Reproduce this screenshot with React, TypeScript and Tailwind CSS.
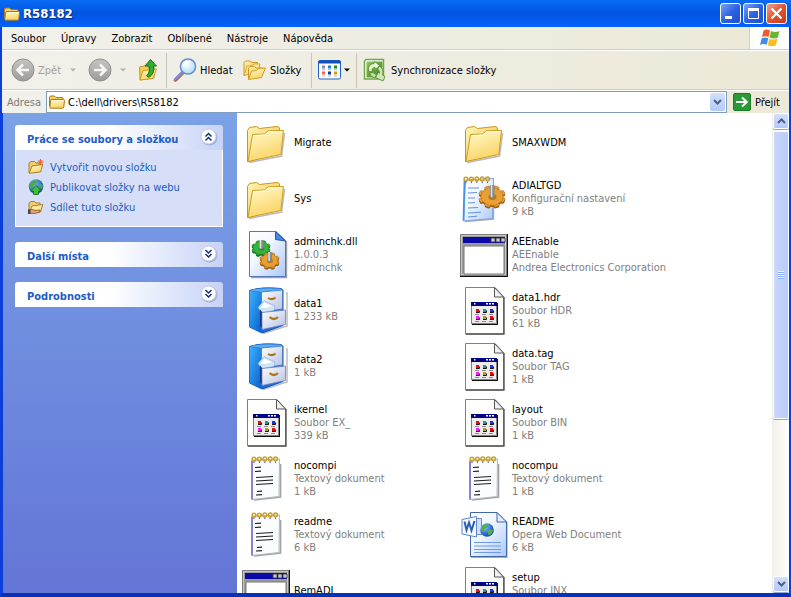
import type { ReactNode } from "react";

const menus = ["Soubor", "Úpravy", "Zobrazit", "Oblíbené", "Nástroje", "Nápověda"];

type IconName = "folder" | "dll" | "config" | "app" | "cabinet" | "generic" | "text" | "webdoc";

const files: { name: string; icon: IconName; lines: string[] }[] = [
  { name: "Migrate", icon: "folder", lines: [] },
  { name: "SMAXWDM", icon: "folder", lines: [] },
  { name: "Sys", icon: "folder", lines: [] },
  { name: "ADIALTGD", icon: "config", lines: ["Konfigurační nastavení", "9 kB"] },
  { name: "adminchk.dll", icon: "dll", lines: ["1.0.0.3", "adminchk"] },
  { name: "AEEnable", icon: "app", lines: ["AEEnable", "Andrea Electronics Corporation"] },
  { name: "data1", icon: "cabinet", lines: ["1 233 kB"] },
  { name: "data1.hdr", icon: "generic", lines: ["Soubor HDR", "61 kB"] },
  { name: "data2", icon: "cabinet", lines: ["1 kB"] },
  { name: "data.tag", icon: "generic", lines: ["Soubor TAG", "1 kB"] },
  { name: "ikernel", icon: "generic", lines: ["Soubor EX_", "339 kB"] },
  { name: "layout", icon: "generic", lines: ["Soubor BIN", "1 kB"] },
  { name: "nocompi", icon: "text", lines: ["Textový dokument", "1 kB"] },
  { name: "nocompu", icon: "text", lines: ["Textový dokument", "1 kB"] },
  { name: "readme", icon: "text", lines: ["Textový dokument", "6 kB"] },
  { name: "README", icon: "webdoc", lines: ["Opera Web Document", "6 kB"] },
  { name: "RemADI", icon: "app", lines: [] },
  { name: "setup", icon: "generic", lines: ["Soubor INX", "1 kB"] },
];

// gradients shared by all icons
function Gradients() {
  return (
    <svg className="absolute size-0" aria-hidden="true">
      <defs>
        <linearGradient id="folderFront" x1="0" y1="0" x2="0.4" y2="1">
          <stop offset="0" stopColor="#fffbd0" />
          <stop offset="1" stopColor="#fbd465" />
        </linearGradient>
        <linearGradient id="folderBack" x1="0" y1="0" x2="1" y2="1">
          <stop offset="0" stopColor="#fff5b8" />
          <stop offset="1" stopColor="#eebb3c" />
        </linearGradient>
        <linearGradient id="bluePage" x1="0" y1="0" x2="1" y2="1">
          <stop offset="0" stopColor="#ffffff" />
          <stop offset="0.4" stopColor="#f2f7ff" />
          <stop offset="1" stopColor="#a9c8fb" />
        </linearGradient>
        <linearGradient id="cabSide" x1="0" y1="0" x2="1" y2="1">
          <stop offset="0" stopColor="#3fb0fb" />
          <stop offset="1" stopColor="#0560cf" />
        </linearGradient>
        <linearGradient id="drawer" x1="0" y1="0" x2="1" y2="1">
          <stop offset="0" stopColor="#ffffff" />
          <stop offset="1" stopColor="#b6bfe2" />
        </linearGradient>
        <linearGradient id="greyDisc" x1="0" y1="0" x2="0" y2="1">
          <stop offset="0" stopColor="#c6c5c1" />
          <stop offset="1" stopColor="#9b9b99" />
        </linearGradient>
        <linearGradient id="syncGreen" x1="0" y1="0" x2="1" y2="1">
          <stop offset="0" stopColor="#8fc85a" />
          <stop offset="1" stopColor="#3f7f1c" />
        </linearGradient>
        <radialGradient id="lens" cx="0.4" cy="0.35" r="0.7">
          <stop offset="0" stopColor="#ffffff" />
          <stop offset="1" stopColor="#a9dcf8" />
        </radialGradient>
        <radialGradient id="globe" cx="0.35" cy="0.3" r="0.8">
          <stop offset="0" stopColor="#8cc4ff" />
          <stop offset="0.6" stopColor="#2a6fd0" />
          <stop offset="1" stopColor="#123c8a" />
        </radialGradient>
      </defs>
    </svg>
  );
}

function Gear({ x, y, r, fill, stroke }: { x: number; y: number; r: number; fill: string; stroke: string }) {
  const teeth = [0, 45, 90, 135, 180, 225, 270, 315];
  const cog = (
    <g>
      {teeth.map((a) => (
        <rect key={a} x={-r * 0.21} y={-r} width={r * 0.42} height={r * 0.6} rx="1.5" transform={`scale(1 .8) rotate(${a + 22})`} />
      ))}
      <ellipse rx={r * 0.82} ry={r * 0.66} />
    </g>
  );
  return (
    <g transform={`translate(${x} ${y})`}>
      <g transform="translate(0 1.5)" fill={stroke}>
        {cog}
      </g>
      <g fill={fill} stroke={stroke} strokeWidth="0.5">
        {cog}
      </g>
      <ellipse rx={r * 0.78} ry={r * 0.62} fill={fill} />
      <ellipse cx="0.5" cy="0.5" rx={r * 0.3} ry={r * 0.22} fill={stroke} opacity=".6" />
      <rect x="-2" y={-r * 0.85} width="4.500" height={r * 0.95} rx="1" fill="#85888d" />
      <rect x="-1.2" y={-r * 0.85} width="1.500" height={r * 0.9} fill="#dfe1e4" />
    </g>
  );
}

function Spiral({ from }: { from: number }) {
  return (
    <g fill="none" stroke="#c9a02a" strokeWidth="1.5">
      {[0, 1, 2, 3, 4].map((i) => (
        <g key={i}>
          <circle cx={from + i * 5.4} cy={5.2 - i * 0.1} r="1.9" />
          <path d={`M${from + i * 5.4} 7.5v1.6`} stroke="#5a55a0" strokeWidth="1" />
        </g>
      ))}
    </g>
  );
}

const drawings: Record<IconName, ReactNode> = {
  folder: (
    <>
      <path d="M8 44.500L40.500 38L43.500 15" fill="none" stroke="#9c9c9c" strokeWidth="1.600" opacity=".7" />
      <path d="M6.500 43.500V12.500L8.500 9.500L15.500 8.500L18.500 10.500L36 8.500Q38.500 8.500 38.500 11V36Z" fill="url(#folderBack)" stroke="#c9961b" />
      <path d="M7 43.500L11.500 16.500L23.500 16L27 12.800L42.500 12.500L39.800 36.500Z" fill="url(#folderFront)" stroke="#cf9c1c" />
      <path d="M12.600 17.600L24 17L27.400 13.900H41.300" fill="none" stroke="#fffde8" />
    </>
  ),
  dll: (
    <>
      <path d="M10 47.500H45.500V11" fill="none" stroke="#777" strokeWidth="1.400" opacity=".7" />
      <path d="M8.500 1.500H35L44.500 10.500V46.500H8.500Z" fill="url(#bluePage)" stroke="#5377b8" />
      <path d="M34.500 1.500L44.500 11L34.500 9.500Z" fill="#3c8cf0" stroke="#2659a8" />
      <Gear x={20} y={18} r={9.5} fill="#35b43b" stroke="#12741c" />
      <Gear x={28.5} y={30.5} r={10} fill="#e8a032" stroke="#9a5c10" />
    </>
  ),
  config: (
    <>
      <path d="M6 47.500L34.500 45V20" fill="none" stroke="#888" strokeWidth="1.400" opacity=".7" />
      <path d="M6.500 6L34.500 4.500L33.500 44.500L4.500 47Z" fill="url(#bluePage)" stroke="#7ea2dc" />
      <path d="M5.500 7L4.500 46.500" stroke="#3f95e8" strokeWidth="1.800" />
      <Spiral from={7} />
      <path d="M9 14h11M9 19l9-.5M9 24h7M9 29l7-.5M9 34l10-.5M9 39l13-.8M9 43l9-.8" fill="none" stroke="#5c93dc" />
      <Gear x={33} y={22.5} r={13.5} fill="#ea9f34" stroke="#9a5c10" />
    </>
  ),
  app: (
    <>
      <path d="M1 4H49V47H1Z" fill="#111" />
      <path d="M1 4H48V46H1Z" fill="#7d7d7d" />
      <path d="M2 5H47V45H2Z" fill="#c6c6c6" />
      <path d="M3 6H46V44H3Z" fill="#9b9b9b" />
      <path d="M4 7H46V13H4Z" fill="#0a0aa8" />
      <path d="M32 8h4v4h-4zM37 8h4v4h-4zM42 8h4v4h-4z" fill="#c9c9c9" stroke="#333" strokeWidth=".8" />
      <path d="M5 16H45V44H5Z" fill="#fff" stroke="#777" />
    </>
  ),
  cabinet: (
    <>
      <path d="M22 47.500L46 40V6" fill="none" stroke="#777" strokeWidth="1.500" opacity=".5" />
      <path d="M8.500 4.500Q20 .5 40 2.500L42 4V39.500L21 47L8.500 41Z" fill="#1c6cd8" stroke="#1356b0" />
      <path d="M8.500 4.800L20.500 6.500V46.500L8.500 41Z" fill="url(#cabSide)" />
      <path d="M9 4.500Q20 1 40 2.800L42 4L20.500 6Z" fill="#5aaef2" />
      <path d="M20.500 6L41.500 4V23L20.500 26Z" fill="url(#drawer)" stroke="#3d78cf" strokeWidth=".8" />
      <path d="M27 12Q31 14.500 34.500 11.500" fill="none" stroke="#a87418" strokeWidth="2" />
      <path d="M17 21.500L23 14.500L34 20L33 24.500L21 27Z" fill="#cfe3f8" stroke="#7fa8dc" strokeWidth=".6" />
      <path d="M19 21.500L23.500 16.500L31 20.500L24 22Z" fill="#fff" />
      <path d="M19 23.500L21.500 26.500V43L19 40Z" fill="#16357a" />
      <path d="M21 26.500L44.500 24V38.500L21 43.500Z" fill="url(#drawer)" stroke="#6d80c4" strokeWidth=".8" />
      <path d="M28.500 31Q33 35 37 31" fill="none" stroke="#b27714" strokeWidth="2.200" />
    </>
  ),
  generic: (
    <>
      <path d="M6.500 1.500H36L44.500 10.500V48H6.500Z" fill="#fefefc" stroke="#808080" />
      <path d="M7 48H45V11" fill="none" stroke="#555" strokeWidth="1.400" />
      <path d="M35.500 1.500V11H44.500Z" fill="#f1f1f1" stroke="#555" />
      <path d="M13 17H39V39H13Z" fill="#111" />
      <path d="M12 16H38V38H12Z" fill="#808080" />
      <path d="M13 17H37V37H13Z" fill="#ececec" />
      <path d="M12 16H38V20H12Z" fill="#000088" />
      <path d="M15 17h1.500v1.500h-1.500z" fill="#ff3" />
      <path d="M27 17h2v1.500h-2zM30 17h2v1.500h-2zM33 17h2v1.500h-2z" fill="#fff" />
      <path d="M17 23h3v3h-3z" fill="#e01010" />
      <path d="M24 23h3v3h-3z" fill="#10a0a0" />
      <path d="M31 23h3v3h-3z" fill="#2030e0" />
      <path d="M17 30h3v3h-3z" fill="#f020f0" />
      <path d="M24 30h3v3h-3z" fill="#b0a000" />
      <path d="M31 30h3v3h-3z" fill="#e01010" />
      <path d="M17 26.500h3.500v-2M24 26.500h3.500v-2M31 26.500h3.500v-2M17 33.500h3.500v-2M24 33.500h3.500v-2M31 33.500h3.500v-2" fill="none" stroke="#111" />
      <path d="M16 28.500h4M23 28.500h4M30 28.500h4M16 35.500h4M23 35.500h4M30 35.500h4" stroke="#8a8a8a" />
    </>
  ),
  text: (
    <>
      <path d="M13 46L39.500 43V10" fill="none" stroke="#888" strokeWidth="1.600" opacity=".8" />
      <path d="M11.500 6L38.500 5L38 42.500L11 45.500Z" fill="#fbfcfd" stroke="#a9b8c4" />
      <path d="M11 7L11 45.500" stroke="#7d7cd0" strokeWidth="1.800" />
      <Spiral from={13} />
      <path d="M14 13.500l6-.3M14 17.500l6-.3M15 23.500l17-1M15 27l17-1M15 30.500l17-1M16 37.500l5-.3M15 41l6-.4" stroke="#1d1d1d" strokeWidth="1.200" />
    </>
  ),
  webdoc: (
    <>
      <path d="M12 47.500H48V12" fill="none" stroke="#888" strokeWidth="1.200" opacity=".7" />
      <path d="M11.500 2.500H38L47.500 12V46.500H11.500Z" fill="url(#bluePage)" stroke="#3f67a8" />
      <path d="M38 2.500V12H47.500Z" fill="#e2edff" stroke="#3f67a8" />
      <path d="M15 32.500h27M15 36h27M15 39.500h27M15 42.500h27" stroke="#6f9be0" />
      <path d="M16 8.500H22.500V24.500H16Z" fill="#cfe0fa" stroke="#6f8fc8" />
      <path d="M3 9.500L17.500 6.500V27L3 24Z" fill="#f4f8ff" stroke="#5d84cc" />
      <path d="M5.500 11.500L7.500 20L10 12.500L12.500 20.500L15.500 11" fill="none" stroke="#2a5cb8" strokeWidth="2" />
      <circle cx="28" cy="20" r="6.800" fill="url(#globe)" />
      <path d="M24 15.500q3-2 5.500-1l-1 3-3 1.500-2.500 3-1-2zM28.500 21l3.500-2 2 1.500-1.500 3.500-3 1.500z" fill="#52b244" />
    </>
  ),
};

function FolderIcon({ className }: { className?: string }) {
  return (
    <svg viewBox="0 0 16 16" className={className} aria-hidden="true">
      <path d="M.5 12V3.500Q.5 2 2 2H5.500L7 3.500H13Q14 3.500 14 4.500V12Z" fill="#f7cf5c" stroke="#a8781a" />
      <path d="M1.500 14.200Q.8 14.200 .8 13L1.600 6.800Q1.800 5.500 3 5.500H14.500Q15.500 5.500 15.500 6.500L14.800 13Q14.600 14.200 13.500 14.200Z" fill="url(#folderFront)" stroke="#a8781a" />
      <path d="M2.800 6.500H14.500" stroke="#fffce0" />
    </svg>
  );
}

function NavDisc({ back }: { back?: boolean }) {
  return (
    <svg viewBox="0 0 24 24" className="size-6" aria-hidden="true">
      <circle cx="12" cy="12" r="11" fill="url(#greyDisc)" stroke="#8f8f8d" />
      <path d={back ? "M18 12H7M12 6.500L6.500 12L12 17.500" : "M6 12H17M12 6.500L17.500 12L12 17.500"} fill="none" stroke="#f6f5f2" strokeWidth="2.600" />
    </svg>
  );
}

function Caret({ className }: { className: string }) {
  return (
    <svg viewBox="0 0 6 4" className={`h-1 w-1.5 ${className}`} aria-hidden="true">
      <path d="M0 0.500H6L3 3.500Z" fill="currentColor" />
    </svg>
  );
}

function UpIcon() {
  return (
    <svg viewBox="0 0 20 24" className="h-6 w-5" aria-hidden="true">
      <path d="M1.500 9L8 7.500L10 9.500L16 9V20L2 22Z" fill="#f2cc55" stroke="#c89a20" />
      <path d="M2 22L5 12.500L11 12L18.500 11L15 20.500Z" fill="url(#folderFront)" stroke="#cf9c1c" />
      <path d="M8.500 17.500Q12.500 15 11 8H7L12.500 1.500L18.500 8H15.500Q17 16 10.500 19.500Z" fill="#2fae30" stroke="#11701a" />
    </svg>
  );
}

function SearchIcon() {
  return (
    <svg viewBox="0 0 24 24" className="size-6" aria-hidden="true">
      <path d="M10.500 14L2.500 22" stroke="#b06a50" strokeWidth="3.600" strokeLinecap="round" />
      <path d="M9.500 13.800L2.200 21" stroke="#7c8fe0" strokeWidth="2.400" strokeLinecap="round" />
      <circle cx="15" cy="8.500" r="7.600" fill="url(#lens)" stroke="#6a8fd0" strokeWidth="1.500" />
      <path d="M10.500 8Q11 4 15.500 3.800" fill="none" stroke="#fff" strokeWidth="1.600" />
    </svg>
  );
}

function FoldersIcon() {
  return (
    <svg viewBox="0 0 24 24" className="size-6" aria-hidden="true">
      <path d="M1 17.500V4.500L2.500 3H7L9 4.500H14.500V7" fill="url(#folderBack)" stroke="#d3982a" />
      <path d="M1 17.500L4 8L9 7.500L11 6H17L15 14Z" fill="url(#folderFront)" stroke="#d9a52c" />
      <path d="M5.500 21V10L7 8.500H11.500L13.500 10H19.500V12" fill="url(#folderBack)" stroke="#d3982a" />
      <path d="M5.500 21.500L8.500 13L13.500 12.500L15.500 10.500L22.500 10L18.500 19.500Z" fill="url(#folderFront)" stroke="#cf9c1c" />
    </svg>
  );
}

function ViewsIcon() {
  return (
    <svg viewBox="0 0 24 20" className="h-5 w-6" aria-hidden="true">
      <rect x=".5" y=".5" width="22" height="18.500" rx="1.500" fill="#fff" stroke="#1c5fc8" />
      <path d="M.5 1.500Q.5 .5 2 .5H21Q22.500 .5 22.500 1.500V3.500H.5Z" fill="#1450b8" />
      <path d="M4 5.500h3v3h-3z" fill="#8b86c0" />
      <path d="M10 5.500h3v3h-3z" fill="#1a7fe0" />
      <path d="M16 5.500h3v3h-3z" fill="#14961c" />
      <path d="M4 11.500h3v3h-3z" fill="#f06848" />
      <path d="M10 11.500h3v3h-3z" fill="#1038a8" />
      <path d="M16 11.500h3v3h-3z" fill="#d0a010" />
      <path d="M4 9.700h3M10 9.700h3M16 9.700h3M4 16h3M10 16h3M16 16h3" stroke="#b5b5b5" />
    </svg>
  );
}

function SyncIcon() {
  return (
    <svg viewBox="0 0 24 24" className="size-6" aria-hidden="true">
      <path d="M3 1.500H20.500V21H1.500V3Z" fill="#fff" stroke="#6fa848" strokeWidth="1.500" />
      <path d="M4 3.500H19.500V19.500H3.500V4Z" fill="url(#syncGreen)" />
      <path d="M5.500 13Q4.500 6 11 5.500L11.500 3.500L17 7.500L12.500 11.500L12 9.500Q8.500 9.500 9 14Z" fill="#e6f4d6" stroke="#4d8a2a" strokeWidth=".8" />
      <path d="M16.500 8Q21 11 19.500 17L22 18.500L20 23L12.500 19.500L15.500 14L16.500 15.500Q17 12.500 14.500 11Z" fill="#d2e6bb" stroke="#4d8a2a" strokeWidth=".8" />
      <path d="M6.500 15L10.500 14.500Q11.500 16.500 13.500 16.500L12 20Q8 19.500 6.500 15Z" fill="#c2dda6" stroke="#4d8a2a" strokeWidth=".8" />
    </svg>
  );
}

function WindowsFlag() {
  return (
    <svg viewBox="0 0 20 18" className="h-[18px] w-5" aria-hidden="true">
      <path d="M3.500 1.500Q6.500 -.3 10 1.500L8.500 8Q5 6.500 2 8Z" fill="#ee5a2c" />
      <path d="M11 2Q15 4 19.500 2L17.800 8.800Q13.500 10.500 9.500 8.500Z" fill="#6db52f" />
      <path d="M1.700 9.200Q5 7.600 8.300 9.200L6.800 15.800Q3.500 14.300 0 16Z" fill="#3f8fe6" />
      <path d="M9.200 9.700Q13 11.400 17.500 9.800L15.800 16.500Q12 18 7.700 16.200Z" fill="#f9bf1e" />
    </svg>
  );
}

function TitleBar() {
  const button = "flex size-[21px] items-center justify-center rounded-[3px] border border-white";
  return (
    <header className="flex h-[27px] shrink-0 items-center bg-linear-to-b from-[#0a6cf5] via-[#0353e2] to-[#0463fb] pr-1 pl-1">
      <FolderIcon className="size-4" />
      <h1 className="ml-[3px] grow text-[13px] leading-4 font-bold text-white [text-shadow:1px_1px_1px_#0a2a80]">R58182</h1>
      <div className="flex gap-[2px]">
        <button aria-label="Minimalizovat" className={`${button} bg-linear-to-br from-[#7da2f4] via-[#2f62e0] to-[#1d4fd0]`}>
          <svg viewBox="0 0 19 19" className="size-[19px]">
            <path d="M4 12h7v3H4z" fill="#fff" />
          </svg>
        </button>
        <button aria-label="Maximalizovat" className={`${button} bg-linear-to-br from-[#7da2f4] via-[#2f62e0] to-[#1d4fd0]`}>
          <svg viewBox="0 0 19 19" className="size-[19px]">
            <path d="M4.500 5.500H14.500V14.500H4.500Z" fill="none" stroke="#fff" />
            <path d="M4 4h11v3H4z" fill="#fff" />
          </svg>
        </button>
        <button aria-label="Zavřít" className={`${button} bg-linear-to-br from-[#f0a18c] via-[#e0542f] to-[#c83a14]`}>
          <svg viewBox="0 0 19 19" className="size-[19px]">
            <path d="M4.500 4.500L14.500 14.500M14.500 4.500L4.500 14.500" stroke="#fff" strokeWidth="2.200" />
          </svg>
        </button>
      </div>
    </header>
  );
}

function MenuBar() {
  return (
    <div className="flex h-[23px] shrink-0 border-b border-[#d3d0c1]">
      <nav className="flex grow items-center gap-[15px] pl-[9px]">
        {menus.map((m) => (
          <button key={m}>{m}</button>
        ))}
      </nav>
      <div className="flex w-10 items-center justify-center border-l border-[#d3d0c1] bg-white">
        <WindowsFlag />
      </div>
    </div>
  );
}

function Separator() {
  return <div className="h-[35px] w-px bg-[#c9c6b5]" />;
}

function Toolbar() {
  return (
    <div className="flex h-10 shrink-0 items-center border-t border-b border-t-white border-b-[#d3d0c1] pl-[9px]">
      <button className="flex w-[59px] items-center gap-[3px] text-[#a5a296]" disabled>
        <NavDisc back />
        Zpět
      </button>
      <Caret className="text-[#b3b0a3]" />
      <button className="ml-3 flex w-8 items-center" aria-label="Vpřed" disabled>
        <NavDisc />
      </button>
      <Caret className="text-[#b3b0a3]" />
      <button className="mr-2 ml-3" aria-label="Nahoru">
        <UpIcon />
      </button>
      <Separator />
      <button className="ml-1.5 flex w-[70px] items-center gap-[3px]">
        <SearchIcon />
        Hledat
      </button>
      <button className="flex w-[68px] items-center gap-[3px]">
        <FoldersIcon />
        Složky
      </button>
      <Separator />
      <button className="mr-1.5 ml-1.5 flex items-center gap-[2px]" aria-label="Zobrazení">
        <ViewsIcon />
        <Caret className="text-black" />
      </button>
      <Separator />
      <button className="ml-1.5 flex items-center gap-1">
        <SyncIcon />
        Synchronizace složky
      </button>
    </div>
  );
}

function AddressBar() {
  return (
    <div className="flex h-[23px] shrink-0 items-center border-t border-white pr-[9px] pl-[5px]">
      <label htmlFor="address" className="w-[39px] text-[#7f7c73]">
        Adresa
      </label>
      <div className="flex h-[22px] grow items-center border border-[#7f9db9] bg-white pr-px pl-[2px]">
        <FolderIcon className="size-4" />
        <input id="address" type="text" defaultValue="C:\dell\drivers\R58182" className="ml-[3px] min-w-0 grow outline-none" />
        <button aria-label="Historie adres" className="flex h-[18px] w-[15px] items-center justify-center rounded-[2px] bg-linear-to-b from-[#d3e0fd] to-[#b5c9f8]">
          <Chevron />
        </button>
      </div>
      <button className="ml-1.5 flex items-center gap-1">
        <svg viewBox="0 0 18 18" className="size-[18px]" aria-hidden="true">
          <rect x=".5" y=".5" width="17" height="17" rx="1.500" fill="#2a9a36" stroke="#1d7a28" />
          <path d="M3 9H13.500M9 4.500L13.800 9L9 13.500" fill="none" stroke="#fff" strokeWidth="2" />
        </svg>
        Přejít
      </button>
    </div>
  );
}

function Chevron({ up }: { up?: boolean }) {
  return (
    <svg viewBox="0 0 9 6" className="h-1.5 w-[9px]" aria-hidden="true">
      <path d={up ? "M1 5L4.500 1.500L8 5" : "M1 1L4.500 4.500L8 1"} fill="none" stroke="#4d6185" strokeWidth="2" />
    </svg>
  );
}

function Panel({ title, open, children }: { title: string; open?: boolean; children?: ReactNode }) {
  return (
    <section>
      <h2>
        <button
          aria-expanded={!!open}
          className="flex h-[25px] w-full items-center justify-between rounded-t-[3px] bg-linear-to-r from-white from-45% to-[#c6d3f7] pt-[3px] pr-[5px] pl-3 font-bold text-[#215dc6]"
        >
          {title}
          <svg viewBox="0 0 18 18" className="-mt-1 size-[18px]" aria-hidden="true">
            <circle cx="9.500" cy="9.500" r="8" fill="#a3b1d8" />
            <circle cx="8.500" cy="8.500" r="7.500" fill="#fff" stroke="#c3cbe6" />
            <path
              d={open ? "M5.500 8.500L8.500 5.500L11.500 8.500M5.500 12.500L8.500 9.500L11.500 12.500" : "M5.500 5L8.500 8L11.500 5M5.500 9L8.500 12L11.500 9"}
              fill="none"
              stroke="#15317e"
              strokeWidth="1.500"
            />
          </svg>
        </button>
      </h2>
      {open && <div className="border border-t-0 border-white bg-[#d6dff7] px-3 pt-[7px] pb-[9px]">{children}</div>}
    </section>
  );
}

function Task({ icon, label }: { icon: ReactNode; label: string }) {
  return (
    <li>
      <a href="#" className="flex h-5 items-center gap-1.5 text-[#215dc6]">
        <svg viewBox="0 0 16 16" className="size-4" aria-hidden="true">
          {icon}
        </svg>
        {label}
      </a>
    </li>
  );
}

const openFolder = (
  <>
    <path d="M1 14V4L3 2.500H6.500L8 4H12V7" fill="#f0cf6c" stroke="#a8802a" />
    <path d="M1.200 14.300L4 7L14.800 5.500L12.500 13Z" fill="url(#folderFront)" stroke="#a8802a" />
  </>
);

function Sidebar() {
  return (
    <aside className="flex w-[234px] shrink-0 flex-col gap-[15px] bg-linear-to-b from-[#7ba2e7] to-[#6375d6] pt-3 pr-3.5 pl-3">
      <Panel title="Práce se soubory a složkou" open>
        <ul>
          <Task
            label="Vytvořit novou složku"
            icon={
              <>
                {openFolder}
                <path d="M12.500 0V6M9.500 3H15.500M10.500 1L14.500 5M14.500 1L10.500 5" stroke="#e8622a" />
              </>
            }
          />
          <Task
            label="Publikovat složky na webu"
            icon={
              <>
                <circle cx="8" cy="7.500" r="7.300" fill="url(#globe)" />
                <path d="M3 3Q6 .5 9 1L8 5L5 7L4 10L1 8ZM11 4L15 6L14 10L11 9Z" fill="#49a848" />
                <path d="M8 6.500L13.500 12H10.500V15.500H5.500V12H2.500Z" fill="#3cc03c" stroke="#0f6a1c" strokeWidth=".8" />
              </>
            }
          />
          <Task
            label="Sdílet tuto složku"
            icon={
              <>
                {openFolder}
                <path d="M0 11L4 10.500L8 11.500L12 11V13L7 14.500L0 14Z" fill="#e2a878" stroke="#7a4a24" strokeWidth=".7" />
                <path d="M0 10.500H2.500V15H0Z" fill="#4a4a52" />
              </>
            }
          />
        </ul>
      </Panel>
      <Panel title="Další místa" />
      <Panel title="Podrobnosti" />
    </aside>
  );
}

function FileList() {
  return (
    <ul className="grid min-w-0 grow grid-cols-[repeat(2,218px)] content-start overflow-hidden bg-white pt-px pl-1">
      {files.map((f) => (
        <li key={f.name} className="flex h-14 items-center gap-[5px]">
          <svg viewBox="0 0 49 49" className="-mr-px size-[49px] shrink-0" aria-hidden="true">
            {drawings[f.icon]}
          </svg>
          <div className="leading-[13px] whitespace-nowrap">
            <p>{f.name}</p>
            {f.lines.map((line) => (
              <p key={line} className="text-[#808080]">
                {line}
              </p>
            ))}
          </div>
        </li>
      ))}
    </ul>
  );
}

function ScrollBar() {
  const button = "flex h-4 w-full shrink-0 items-center justify-center rounded-[2px] border border-white bg-linear-to-b from-[#d3e0fd] to-[#b5c9f8] shadow-[0_1px_0_#8ea8d8]";
  return (
    <div className="flex w-[17px] shrink-0 flex-col gap-[2px] border-l border-[#eeede5] bg-linear-to-r from-[#f3f1ec] to-[#fefefb] pb-px">
      <button aria-label="Posunout nahoru" className={button}>
        <Chevron up />
      </button>
      <div className="grow">
        <div className="flex h-[65%] flex-col items-center justify-center gap-px rounded-[2px] border border-white bg-linear-to-r from-[#c9d7fc] to-[#b9cbf8] shadow-[0_1px_0_#8ea8d8]">
          {[0, 1, 2, 3].map((i) => (
            <span key={i} className="h-px w-1.5 bg-[#eef4fe] shadow-[0_1px_0_#8cb0f8]" />
          ))}
        </div>
      </div>
      <button aria-label="Posunout dolů" className={button}>
        <Chevron />
      </button>
    </div>
  );
}

export default function App() {
  return (
    <div className="flex h-screen flex-col overflow-hidden bg-[#0a3fdc] font-['DejaVu_Sans_Condensed','DejaVu_Sans',sans-serif] text-[11px] leading-[13px] text-black">
      <Gradients />
      <TitleBar />
      <div className="flex min-h-0 grow flex-col border-x-2 border-b-4 border-[#0a3fdc] border-b-[#0831b8] bg-linear-to-r from-[#f1f0ea] to-[#ece9d8]">
        <MenuBar />
        <Toolbar />
        <AddressBar />
        <main className="flex min-h-0 grow border-l border-[#0a3fdc]">
          <Sidebar />
          <FileList />
          <ScrollBar />
        </main>
      </div>
    </div>
  );
}
